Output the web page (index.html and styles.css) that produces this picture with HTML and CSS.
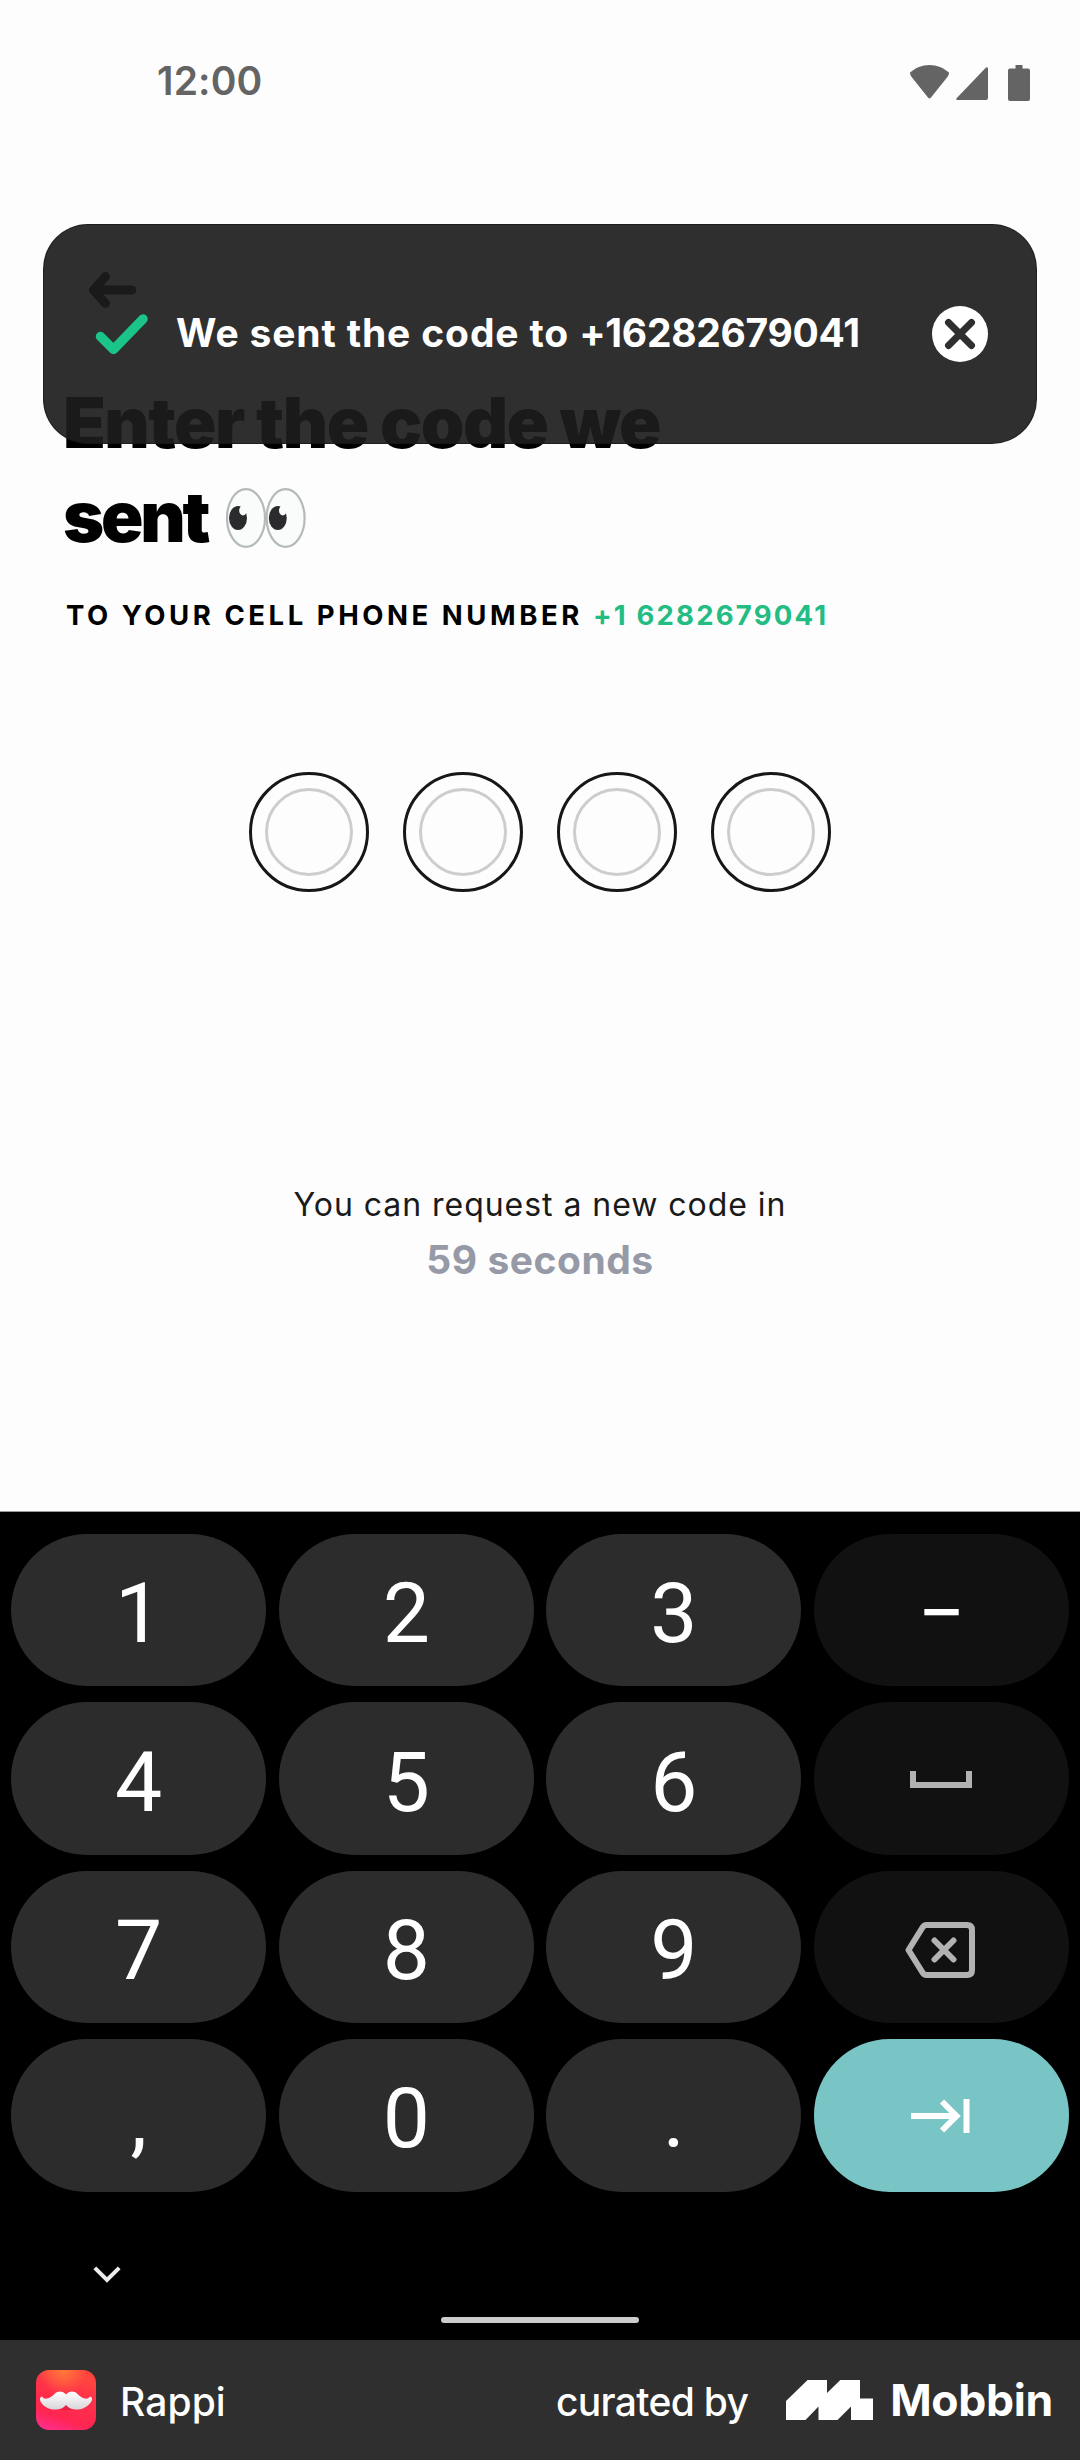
FILE: index.html
```html
<!DOCTYPE html>
<html lang="en">
<head>
<meta charset="utf-8">
<title>Rappi – Enter the code</title>
<link rel="stylesheet" href="styles.css">
</head>
<body>
<div class="page">
  <main class="screen">
    <header class="status">
      <span class="status-time">12:00</span>
      <div class="status-icons">
        <svg class="wifi" width="39" height="34" viewBox="0 0 39 34"><path d="M19.5 0C12 0 5.400 2.800 0 7.600Q0 10 1.600 12L18 32.600Q19.500 34.300 21 32.600L37.400 12Q39 10 39 7.600C33.600 2.800 27 0 19.500 0Z"/></svg>
        <svg class="signal" width="32" height="33" viewBox="0 0 32 33"><path d="M30 .6Q32 -.4 32 2V31Q32 33 30 33H1.500Q-.8 33 .8 31Z"/></svg>
        <svg class="battery" width="22" height="36" viewBox="0 0 22 36"><path d="M7.500 0H14.500V3.500H20Q22 3.500 22 5.500V34Q22 36 20 36H2Q0 36 0 34V5.500Q0 3.500 2 3.500H7.500Z"/></svg>
      </div>
    </header>

    <section class="intro">
      <svg class="back" width="48" height="36" viewBox="0 0 48 36"><path d="M44 18H6M17.500 4.500L5.500 18L17.500 31.500"/></svg>
      <h1 class="title">Enter the code we<br><span class="title-end">sent</span>
        <svg class="eyes" width="80" height="60" viewBox="0 0 80 60" role="img" aria-label="eyes">
          <g class="eye-white"><ellipse cx="20" cy="30" rx="19" ry="28.800"/><ellipse cx="59.600" cy="30" rx="19" ry="28.800"/></g>
          <ellipse cx="12" cy="30" rx="9" ry="12"/><ellipse cx="51.800" cy="30" rx="9" ry="12"/>
          <g class="glint"><ellipse cx="17" cy="22.500" rx="3.800" ry="5"/><ellipse cx="56.800" cy="22.500" rx="3.800" ry="5"/></g>
        </svg>
      </h1>
      <p class="subtitle">TO YOUR CELL PHONE NUMBER <span class="phone">+1 6282679041</span></p>
    </section>

    <div class="otp">
      <div class="slot"></div><div class="slot"></div><div class="slot"></div><div class="slot"></div>
    </div>

    <section class="resend">
      <p class="resend-label">You can request a new code in</p>
      <p class="resend-time">59 seconds</p>
    </section>

    <div class="toast">
      <svg class="check" width="54" height="43" viewBox="0 0 54 43"><path d="M5.500 23.500L18.500 36.500L48 6"/></svg>
      <p class="toast-text">We sent the code to <span class="toast-number">+16282679041</span></p>
      <svg class="close" width="56" height="56" viewBox="0 0 56 56"><circle cx="28" cy="28" r="28"/><path d="M16.500 16.500L39.500 39.500M39.500 16.500L16.500 39.500"/></svg>
    </div>
  </main>

  <section class="keyboard">
    <div class="keys">
      <div class="key">1</div><div class="key">2</div><div class="key">3</div><div class="key key-dark">−</div>
      <div class="key">4</div><div class="key">5</div><div class="key">6</div>
      <div class="key key-dark"><svg class="space" width="62" height="17" viewBox="0 0 62 17"><path d="M3 0V14H59V0"/></svg></div>
      <div class="key">7</div><div class="key">8</div><div class="key">9</div>
      <div class="key key-dark"><svg class="erase" width="70" height="56" viewBox="0 0 70 56"><path d="M21.500 3H62Q67 3 67 8V48Q67 53 62 53H21.500Q19 53 17.500 50.500L3.500 28L17.500 5.500Q19 3 21.500 3ZM29.500 18.500L48.500 37.500M48.500 18.500L29.500 37.500"/></svg></div>
      <div class="key">,</div><div class="key">0</div><div class="key">.</div>
      <div class="key key-next"><svg class="next" width="60" height="34" viewBox="0 0 60 34"><path d="M0 17H46M31 2.500L45.500 17L31 31.500M55.500 0V34"/></svg></div>
    </div>
    <div class="nav">
      <svg class="chevron" width="28" height="18" viewBox="0 0 28 18"><path d="M1.800 1.800L14 14L26.200 1.800"/></svg>
      <div class="home"></div>
    </div>
  </section>

  <footer class="credit">
    <svg class="app-icon" width="60" height="60" viewBox="0 0 60 60">
      <defs>
        <linearGradient id="red" x1="0" y1="1" x2=".35" y2="0"><stop offset="0" stop-color="#ff2f9a"/><stop offset=".32" stop-color="#ff2650"/><stop offset=".75" stop-color="#ff3348"/><stop offset="1" stop-color="#ff4440"/></linearGradient>
        <radialGradient id="glow" cx=".45" cy="0" r=".4"><stop offset="0" stop-color="#ff7a3a"/><stop offset="1" stop-color="#ff7a3a" stop-opacity="0"/></radialGradient>
        <linearGradient id="hair" x1="0" y1="0" x2="0" y2="1"><stop offset="0" stop-color="#fff"/><stop offset="1" stop-color="#d9d5da"/></linearGradient>
      </defs>
      <rect width="60" height="60" rx="13" fill="url(#red)"/>
      <rect width="60" height="60" rx="13" fill="url(#glow)"/>
      <path d="M16 36Q30 45 45 36L30 30Z" fill="#d5153c" opacity=".45"/>
      <path d="M30 24.500C27 21 22 20.500 18.500 24C15 27.500 9 31 6 26.500Q3.500 27 4 30C7 40 24 43 30 35C36 43 52 40 56 30Q56.500 27 54 26.500C51 31 45 27.500 41.500 24C38 20.500 33 21 30 24.500Z" fill="url(#hair)"/>
    </svg>
    <span class="app-name">Rappi</span>
    <span class="curated">curated by</span>
    <svg class="mobbin-mark" width="87" height="40" viewBox="0 0 87 40"><path d="M0 21L21.600 0H41V13L54.300 0H74V18.500H87V40H65V26.500L51.500 40H32.500V26.500L19.500 40H0Z"/></svg>
    <span class="mobbin">Mobbin</span>
  </footer>
</div>
</body>
</html>
```
FILE: styles.css
```css
*, *::after { box-sizing: border-box; }

body {
  margin: 0;
  font-family: Inter, "Liberation Sans", sans-serif;
  background: #fdfdfd;
}

p, h1 { margin: 0; }

svg { display: block; flex: none; }

.page {
  display: flex;
  flex-direction: column;
  width: 1080px;
  height: 2460px;
}

.screen {
  position: relative;
  height: 1512px;
  background: #fdfdfd;
  border-bottom: 1px solid #9a9a9a;
}

/* Status bar */
.status {
  display: flex;
  justify-content: space-between;
  height: 162px;
  padding: 0 50px 0 157px;
}

.status-time {
  font-size: 39px;
  line-height: 162px;
  font-weight: 600;
  letter-spacing: 0.14px;
  color: #646464;
}

.status-icons {
  display: flex;
  padding-top: 65px;
  fill: #646464;
}

.signal { margin: 2px 20px 0 7px; }

/* Heading */
.intro { padding: 110px 64px 0 63px; }

.back {
  margin-left: 25px;
  fill: none;
  stroke: #000;
  stroke-width: 9;
  stroke-linecap: round;
  stroke-linejoin: round;
}

.title {
  margin-top: 67.5px;
  font-size: 70px;
  line-height: 94px;
  font-weight: 900;
  letter-spacing: -1.55px;
  color: #000;
}

.title-end { letter-spacing: -3.2px; }

.eyes {
  display: inline-block;
  margin-left: 6px;
  vertical-align: -6px;
}

.eye-white {
  fill: #fafcfc;
  stroke: #b3bab8;
  stroke-width: 2.2;
}

.eyes > ellipse { fill: #2b2b2d; }

.glint { fill: #fafcfc; }

.subtitle {
  margin-top: 31.5px;
  padding-left: 3px;
  font-size: 27.5px;
  line-height: 40px;
  font-weight: 700;
  letter-spacing: 3.55px;
  white-space: nowrap;
  color: #000;
}

.phone {
  letter-spacing: 2.2px;
  color: #23bd84;
}

/* Code slots */
.otp {
  display: flex;
  justify-content: center;
  gap: 34.3px;
  margin-top: 137px;
}

.slot {
  width: 120px;
  height: 120px;
  padding: 13px;
  border: 3px solid #17171a;
  border-radius: 50%;
}

.slot::after {
  content: "";
  display: block;
  height: 88px;
  border: 3px solid #cdcdcd;
  border-radius: 50%;
}

/* Resend countdown */
.resend {
  padding-top: 288px;
  text-align: center;
}

.resend-label {
  font-size: 32px;
  line-height: 50px;
  font-weight: 400;
  letter-spacing: 0.96px;
  color: #1a1a1a;
}

.resend-time {
  margin-top: 5px;
  font-size: 39px;
  line-height: 50px;
  font-weight: 700;
  letter-spacing: 0.52px;
  color: #9699a6;
}

/* Confirmation toast, see-through over the heading */
.toast {
  position: absolute;
  top: 224px;
  left: 43px;
  display: flex;
  align-items: center;
  width: 994px;
  height: 220px;
  padding: 0 48px 0 51px;
  border: 1px solid rgba(20, 20, 20, 0.6);
  border-radius: 45px;
  background: rgba(28, 28, 28, 0.917);
}

.check {
  fill: none;
  stroke: #1bc489;
  stroke-width: 9.5;
  stroke-linecap: round;
  stroke-linejoin: round;
}

.toast-text {
  flex: 1;
  margin: -3px 0 0 27px;
  font-size: 39px;
  line-height: 50px;
  font-weight: 700;
  letter-spacing: 0.86px;
  white-space: nowrap;
  color: #fff;
}

.toast-number { letter-spacing: -0.3px; }

.close { fill: #fff; }

.close path {
  stroke: #2f2f2f;
  stroke-width: 7;
  stroke-linecap: round;
}

/* Keyboard */
.keyboard {
  height: 828px;
  padding: 22px 11px 0;
  background: #000;
}

.keys {
  display: grid;
  grid-template-columns: repeat(4, 255.3px);
  grid-auto-rows: 152.4px;
  gap: 16px 12.3px;
}

.key {
  display: flex;
  align-items: center;
  justify-content: center;
  padding-top: 8px;
  border-radius: 76px;
  background: #2c2c2c;
  font: 84px/98px Roboto, sans-serif;
  color: #fff;
}

.key svg {
  margin-top: -7px;
  fill: none;
  stroke: #b3b2b2;
  stroke-width: 6;
}

.key-dark { background: #111; }

.key-next { background: #79c5c5; }

.key .space { margin-top: -6px; }

.key .erase {
  margin: -2px 0 0 -2px;
  stroke-linecap: round;
  stroke-linejoin: round;
}

.key .next { stroke: #fff; }

.nav {
  display: grid;
  grid-template-columns: 82px 28px 1fr;
  padding-top: 74px;
}

.chevron {
  grid-column: 2;
  fill: none;
  stroke: #ececec;
  stroke-width: 4;
}

.home {
  grid-column: 1 / -1;
  justify-self: center;
  width: 198px;
  height: 6px;
  margin-top: 33px;
  border-radius: 3px;
  background: #ccc;
}

/* Footer */
.credit {
  display: flex;
  align-items: center;
  height: 120px;
  padding: 0 27px 0 36px;
  background: #2f2f2f;
  color: #fff;
  font-size: 39px;
  line-height: 50px;
  font-weight: 500;
}

.app-name {
  margin: 3px 0 0 24px;
  letter-spacing: 0.1px;
}

.curated {
  margin: 3px 0 0 auto;
  letter-spacing: -0.69px;
}

.mobbin-mark {
  margin-left: 38px;
  fill: #fff;
}

.mobbin {
  margin-left: 17px;
  font-size: 44.5px;
  font-weight: 700;
  letter-spacing: -0.3px;
}
```
